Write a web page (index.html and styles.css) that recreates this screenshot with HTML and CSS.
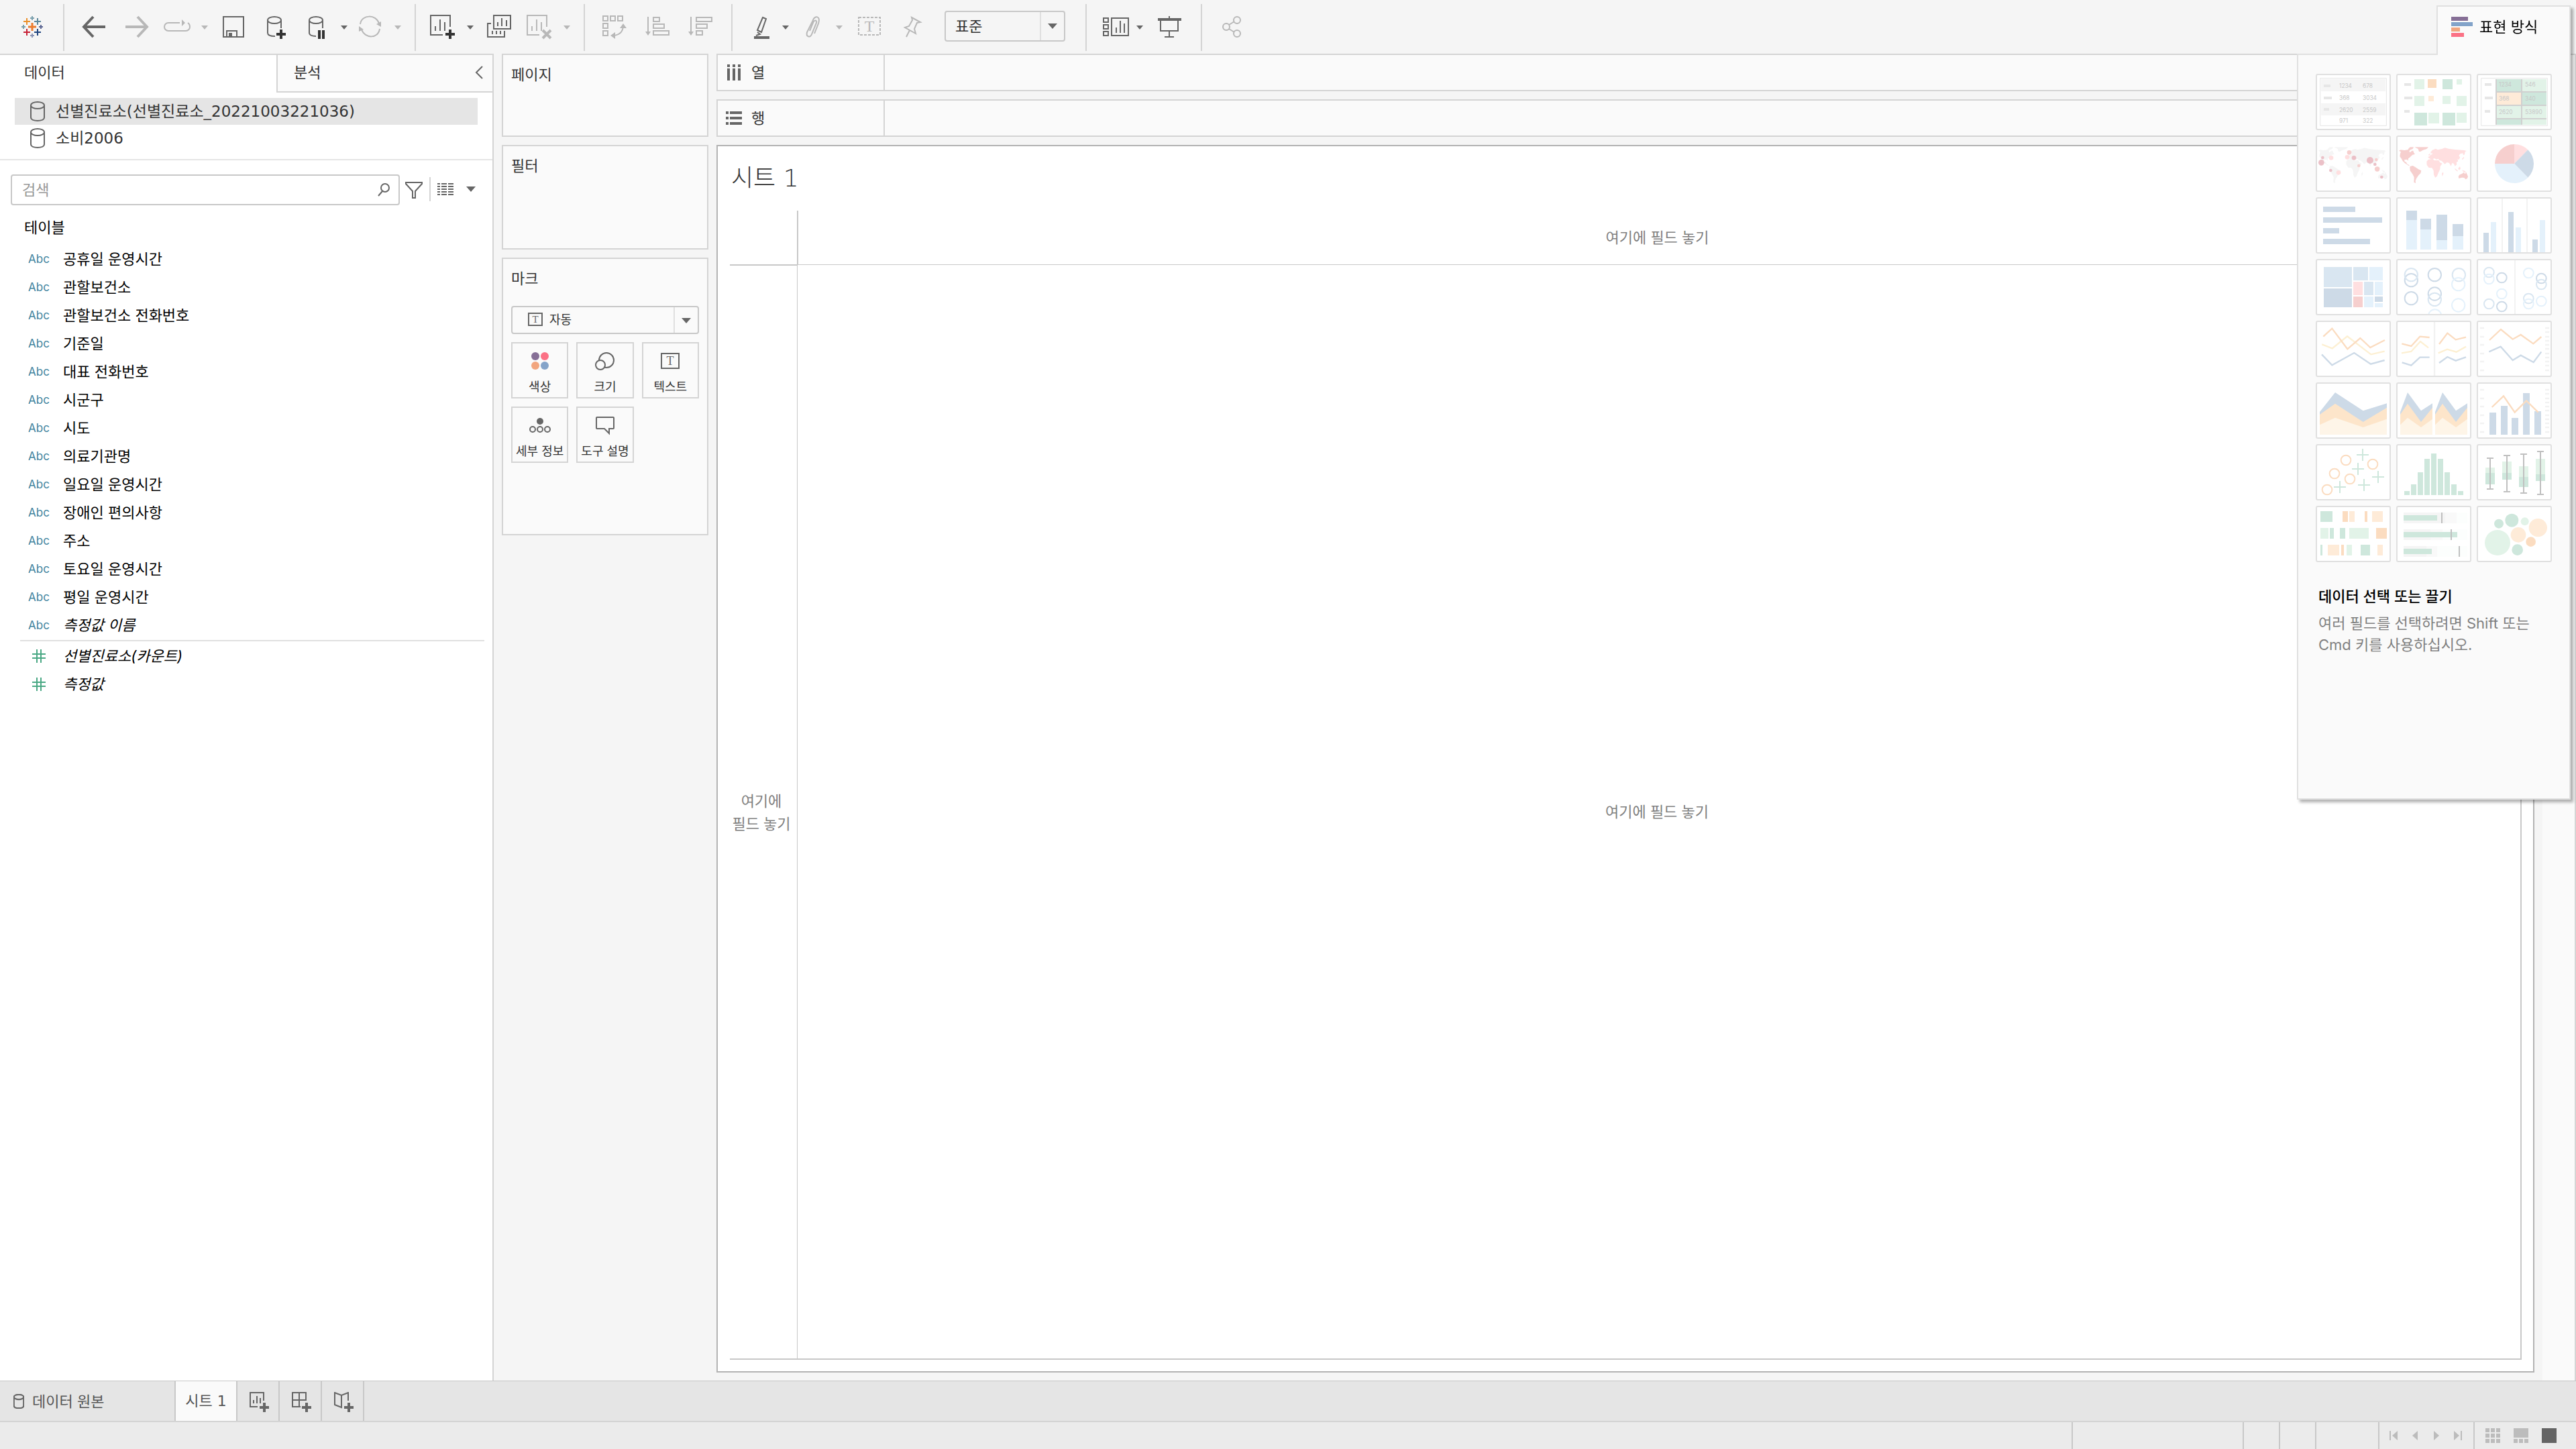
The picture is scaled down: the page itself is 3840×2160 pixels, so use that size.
FILE: index.html
```html
<!DOCTYPE html>
<html lang="ko">

<head>
    <meta charset="UTF-8">
    <meta name="viewport" content="width=device-width, initial-scale=1.0">
    <title>시트 1</title>
    <link rel="stylesheet" href="styles.css">
</head>

<body>
    <!-- Shared shapes -->
    <svg class="defs" aria-hidden="true">
        <symbol id="db" viewBox="0 0 22 30">
            <path d="M1 6v18c0 3 4 5 10 5s10-2 10-5V6" />
            <ellipse cx="11" cy="6" rx="10" ry="5" />
        </symbol>
        <symbol id="world-america" viewBox="0 0 324 240">
            <path d="M6 62l8-4 16 2 16-2 4-6 6-6h16l-4 8-10 4-6 6 4 6 8-8h6l3 9 5 6-12 4-10 10-8 6-1 10-5-6-12 2 2 8 7 2 3 8 8 4 4 3-4 1-18-12-9-9-5-9-8-12 2-12 3-8z" />
            <path d="M76 46h62l-8 8-16 5-12 7h-6l-4-12z" />
            <path d="M56 132l12-3 12 7 12 8 14 7-3 12-9 9-8 11-6 13 1 11-8-4 1-22-6-13-12-17-1-14z" />
            <path d="M272 178l4-8 12-5 8-6 6 7 5-7 8 18-3 9-8 4-6-7-10-1-14 4z" />
        </symbol>
        <symbol id="world-east" viewBox="0 0 324 240">
            <path d="M138 94l-2-4 8-4 2-4 10-5-2-5-5 3-1-7 8-9 14-6 10 5 18-4 14-5 16 4 30 4 40 3 10 3-6 4-2 12-6 3-2-9-12 3-6 8 6 8-6 10-6-2 3 9-8 6 2 9-8 7-6-12-7-2-5 14-8-14-10-3-10 8-8-9-6-6-10-2-5-7-8 3-10-5-11 6z" />
            <path d="M130 110l8-9 20-2 6 6h20l6 10 10 4-9 12-1 14-8 17-6 15-8 5-6-13-1-18-7-12-14-1-9-12z" />
            <path d="M198 164l6-7 1 9-5 10zM138 80l6-6 2 6-6 4zM288 98l8-9 2 5-8 9zM256 140l13 11-1 4-11-9zM271 140l8-7 3 9-7 7zM288 148l14 5 5 9-13-6z" />
        </symbol>
    </svg>

    <header class="toolbar">
        <svg class="tool-icon" viewBox="0 0 64 80">
            <g fill="none" stroke-width="2">
                <path stroke="#eb7c2f" stroke-width="3" d="M32 34v12M26 40h12" />
                <path stroke="#eb912c" d="M24 27v10M19 32h10" />
                <path stroke="#5b879b" d="M40 27v10M35 32h10" />
                <path stroke="#c72035" d="M24 43v10M19 48h10" />
                <path stroke="#1f447e" d="M40 43v10M35 48h10" />
                <path stroke="#7ba0ad" d="M32 24v6M29 27h6M19 37v6M16 40h6" />
                <path stroke="#8a94b5" d="M32 50v6M29 53h6" />
                <path stroke="#5c6692" d="M45 37v6M42 40h6" />
            </g>
        </svg>
        <div class="tool-group">
            <button class="tool" aria-label="실행 취소"><svg viewBox="0 0 64 80"><path stroke-width="4" d="M49 40H18M31 25L17 40l14 15" /></svg></button>
            <button class="tool off" aria-label="다시 실행"><svg viewBox="0 0 64 80"><path stroke-width="4" d="M15 40h31M33 25l14 15-14 15" /></svg></button>
            <button class="tool wide off" aria-label="재생"><svg viewBox="0 0 80 80"><path d="M32 34H15a6 6 0 0 0-6 6v0a6 6 0 0 0 6 6h26a6 6 0 0 0 6-6q0-4-3-6" /><path class="solid" d="M35 29v10l5-5zM64 38h10l-5 6z" /></svg></button>
            <button class="tool" aria-label="저장"><svg viewBox="0 0 64 80"><path d="M17 25h30v30H17zM22 55v-9h15v9" /><path class="solid" d="M25 49h5v6h-5z" /></svg></button>
            <button class="tool" aria-label="새 데이터 원본"><svg viewBox="0 0 64 80"><path d="M19 30v19c0 3 4 5 11 5M39 30v12" /><ellipse cx="29" cy="30" rx="10" ry="5" /><path class="dark" d="M39 44v14M32 51h14" /></svg></button>
            <button class="tool wide" aria-label="자동 업데이트 일시 중지"><svg viewBox="0 0 80 80"><path d="M17 30v19c0 3 4 5 10 5M37 30v12" /><ellipse cx="27" cy="30" rx="10" ry="5" /><path class="dark" d="M32 45v13M38 45v13" /><path class="solid" d="M64 38h10l-5 6z" /></svg></button>
            <button class="tool wide off" aria-label="업데이트 실행"><svg viewBox="0 0 80 80"><path d="M13 36c2-15 24-15 28-1M42 43c-2 15-22 15-27 1" /><path class="solid" d="M37 36l7-4v8zM11 39v8l7-3zM64 38h10l-5 6z" /></svg></button>
        </div>
        <div class="tool-group">
            <button class="tool wide" aria-label="새 워크시트"><svg viewBox="0 0 80 80"><path d="M28 52H10V23h29v17M17 46v-7M24 46V29M31 46V33" /><path class="dark" d="M39 44v14M32 51h14" /><path class="solid" d="M64 38h10l-5 6z" /></svg></button>
            <button class="tool" aria-label="복제"><svg viewBox="0 0 64 80"><path d="M24 23h25v20H24zM20 35h-5v20h25v-9M30 39v-6M36 39V27M43 39v-9M22 51v-5M28 51v-5M34 51v-5" /></svg></button>
            <button class="tool wide off" aria-label="시트 지우기"><svg viewBox="0 0 80 80"><path d="M28 52H10V23h29v17M17 46v-7M24 46V29M31 46V33" /><path stroke-width="4" d="M33 45l12 12M45 45L33 57" /><path class="solid" d="M64 38h10l-5 6z" /></svg></button>
        </div>
        <div class="tool-group">
            <button class="tool off" aria-label="행과 열 바꾸기"><svg viewBox="0 0 64 80"><path d="M15 24h7v7h-7zM26 24h7v7h-7zM37 24h7v7h-7zM15 35h7v7h-7zM15 46h7v7h-7zM45 39q-1 13-15 14" /><path class="solid" d="M45 35l5 7H40zM26 53l7-5v10z" /></svg></button>
            <button class="tool off" aria-label="오름차순 정렬"><svg viewBox="0 0 64 80"><path d="M18 25v24M26 26h9v6h-9zM26 36h16v6H26zM26 46h23v6H26z" /><path class="solid" d="M14 47h8l-4 6z" /></svg></button>
            <button class="tool off" aria-label="내림차순 정렬"><svg viewBox="0 0 64 80"><path d="M18 25v24M26 26h23v6H26zM26 36h16v6H26zM26 46h9v6h-9z" /><path class="solid" d="M14 47h8l-4 6z" /></svg></button>
        </div>
        <div class="tool-group">
            <button class="tool wide" aria-label="강조 표시"><svg viewBox="0 0 80 80"><path d="M33 26l5 2-7 20-6-3zM25 48l4 3-6 2" /><path class="thick" d="M20 56h23" /><path class="solid" d="M62 38h10l-5 6z" /></svg></button>
            <button class="tool wide off" aria-label="멤버 그룹화"><svg viewBox="0 0 80 80"><path d="M30 50l6-15c4-12-6-12-8-5l-9 18c-2 7 5 9 7 3l7-17c1-5-4-4-5 0l-5 12" /><path class="solid" d="M62 38h10l-5 6z" /></svg></button>
            <button class="tool off" aria-label="마크 레이블 표시"><svg viewBox="0 0 64 80"><path stroke-dasharray="4 2" d="M16 26h32v26H16z" /><text x="32" y="47" font-size="24">T</text></svg></button>
            <button class="tool off" aria-label="카드 고정"><svg viewBox="0 0 64 80"><path d="M31 26l13 7-5 1-4 9 2 7-16-9 6-2 5-9zM28 45l-5 10" /></svg></button>
            <div class="combo fit">
                <select aria-label="맞춤"><option>표준</option></select>
                <svg class="combo-arrow" viewBox="0 0 34 42"><path class="solid" d="M10 17h14l-7 8z" /></svg>
            </div>
        </div>
        <div class="tool-group">
            <button class="tool wide" aria-label="카드 표시"><svg viewBox="0 0 80 80"><path d="M13 27h7v6h-7zM13 37h7v6h-7zM13 47h7v6h-7zM25 27h25v26H25zM32 49v-8M38 49V31M44 49V35" /><path class="solid" d="M62 38h10l-5 6z" /></svg></button>
            <button class="tool" aria-label="프레젠테이션 모드"><svg viewBox="0 0 64 80"><path d="M31 24v4M18 30v16h26V30M31 46v9M24 55h14" /><path class="thick" d="M14 29h35" /></svg></button>
        </div>
        <div class="tool-group">
            <button class="tool off" aria-label="공유"><svg viewBox="0 0 64 80"><circle cx="24" cy="40" r="5" /><circle cx="40" cy="30" r="5" /><circle cx="40" cy="50" r="5" /><path d="M28 37l8-5M28 43l8 5" /></svg></button>
        </div>
    </header>

    <main class="workspace">
        <!-- Data pane -->
        <aside class="data-pane">
            <div class="pane-tabs">
                <button class="pane-tab active">데이터</button>
                <button class="pane-tab">분석<svg class="chevron" viewBox="0 0 12 20"><path d="M11 1L2 10l9 9" /></svg></button>
            </div>
            <ul class="sources">
                <li class="source selected"><svg class="db-icon"><use href="#db" /></svg>선별진료소(선별진료소_20221003221036)</li>
                <li class="source"><svg class="db-icon"><use href="#db" /></svg>소비2006</li>
            </ul>
            <div class="search-row">
                <label class="search">
                    <input type="text" placeholder="검색" aria-label="검색">
                    <svg viewBox="0 0 20 20"><ellipse cx="12" cy="7" rx="6" ry="6" /><path d="M8 12l-6 7" /></svg>
                </label>
                <button class="filter-btn" aria-label="필터"><svg viewBox="0 0 28 28"><path d="M2 3h24v2L16 16v10h-4V16L2 5z" /></svg></button>
                <button class="view-btn" aria-label="보기"><svg viewBox="0 0 58 20">
                        <path stroke-dasharray="4 2 8 2 8 2" d="M0 2h24M0 6h24M0 10h24M0 14h24M0 18h24" />
                        <path class="solid" d="M43 6h14l-7 8z" />
                    </svg></button>
            </div>
            <h2 class="table-title">테이블</h2>
            <ul class="fields">
                <li><span class="type">Abc</span>공휴일 운영시간</li>
                <li><span class="type">Abc</span>관할보건소</li>
                <li><span class="type">Abc</span>관할보건소 전화번호</li>
                <li><span class="type">Abc</span>기준일</li>
                <li><span class="type">Abc</span>대표 전화번호</li>
                <li><span class="type">Abc</span>시군구</li>
                <li><span class="type">Abc</span>시도</li>
                <li><span class="type">Abc</span>의료기관명</li>
                <li><span class="type">Abc</span>일요일 운영시간</li>
                <li><span class="type">Abc</span>장애인 편의사항</li>
                <li><span class="type">Abc</span>주소</li>
                <li><span class="type">Abc</span>토요일 운영시간</li>
                <li><span class="type">Abc</span>평일 운영시간</li>
                <li><span class="type">Abc</span><em>측정값 이름</em></li>
            </ul>
            <ul class="fields measures">
                <li><svg class="type number" viewBox="0 0 20 20"><path d="M7 0v20M13 0v20M0 7h20M0 13h20" /></svg><em>선별진료소(카운트)</em></li>
                <li><svg class="type number" viewBox="0 0 20 20"><path d="M7 0v20M13 0v20M0 7h20M0 13h20" /></svg><em>측정값</em></li>
            </ul>
        </aside>

        <!-- Cards -->
        <section class="cards">
            <div class="card pages"><h3>페이지</h3></div>
            <div class="card filters"><h3>필터</h3></div>
            <div class="card marks">
                <h3>마크</h3>
                <div class="combo mark-type">
                    <svg class="combo-icon" viewBox="0 0 22 20"><path d="M1 1h20v18H1z" /><text x="11" y="15" font-size="15">T</text></svg>
                    <select aria-label="마크 유형"><option>자동</option></select>
                    <svg class="combo-arrow" viewBox="0 0 34 38"><path class="solid" d="M10 16h14l-7 8z" /></svg>
                </div>
                <div class="mark-grid">
                    <button class="mark"><svg viewBox="0 0 40 32">
                            <circle cx="13" cy="9" r="6" fill="#866f96" stroke="none" />
                            <circle cx="27" cy="9" r="6" fill="#fb7185" stroke="none" />
                            <circle cx="13" cy="23" r="6" fill="#f2a57e" stroke="none" />
                            <circle cx="27" cy="23" r="6" fill="#84a3c9" stroke="none" />
                        </svg>색상</button>
                    <button class="mark"><svg viewBox="0 0 40 32"><circle cx="22" cy="15" r="11" /><circle cx="13" cy="22" r="7" fill="#fafafa" /></svg>크기</button>
                    <button class="mark"><svg viewBox="0 0 40 32"><path d="M7 5h26v22H7z" /><text x="20" y="22" font-size="18">T</text></svg>텍스트</button>
                    <button class="mark"><svg viewBox="0 0 40 32"><circle class="solid" cx="20" cy="10" r="5" /><circle cx="9" cy="22" r="4" /><circle cx="20" cy="22" r="4" /><circle cx="31" cy="22" r="4" /></svg>세부 정보</button>
                    <button class="mark"><svg viewBox="0 0 40 32"><path d="M8 4h24a1 1 0 0 1 1 1v15a1 1 0 0 1-1 1h-6v7l-7-7H8a1 1 0 0 1-1-1V5a1 1 0 0 1 1-1z" /></svg>도구 설명</button>
                </div>
            </div>
        </section>

        <!-- Shelves and sheet -->
        <section class="work">
            <div class="shelf">
                <div class="shelf-name"><svg viewBox="0 0 24 24"><path stroke-width="4" d="M4 0v4M12 0v4M20 0v4M4 6v18M12 6v18M20 6v18" /></svg>열</div>
            </div>
            <div class="shelf">
                <div class="shelf-name"><svg viewBox="0 0 24 24"><path stroke-width="4" d="M0 4h4M0 12h4M0 20h4M6 4h18M6 12h18M6 20h18" /></svg>행</div>
            </div>
            <div class="sheet">
                <h1>시트 1</h1>
                <div class="drop-grid">
                    <div class="corner"></div>
                    <div class="drop top">여기에 필드 놓기</div>
                    <div class="drop side">여기에<br>필드 놓기</div>
                    <div class="drop center">여기에 필드 놓기</div>
                </div>
            </div>
        </section>
        <div class="edge"></div>
    </main>

    <!-- Show me panel -->
    <aside class="show-me">
        <button class="show-me-tab"><svg viewBox="0 0 32 32">
                <path fill="#866f96" d="M0 1h25v6H0z" />
                <path fill="#82a3c9" d="M0 9h32v6H0z" />
                <path fill="#f1a57f" d="M0 17h13v6H0z" />
                <path fill="#fb7185" d="M0 25h19v6H0z" />
            </svg>표현 방식</button>
        <div class="show-me-body">
            <div class="charts">
                <button class="chart" disabled aria-label="텍스트 테이블"><svg viewBox="0 0 324 240">
                        <path fill="#f5f5f5" d="M18 18h288v54H18zM18 126h288v54H18z" />
                        <path fill="none" stroke="#e5e5e5" stroke-width="3" d="M14 14h296v212H14z" />
                        <path fill="#e6e6e6" d="M30 42h30v12H30zM30 96h36v12H30zM30 147h24v12H30z" />
                        <g class="num"><text x="99" y="56">1234</text><text x="204" y="56">678</text><text x="99" y="110">368</text><text x="204" y="110">3034</text><text x="99" y="164">2620</text><text x="204" y="164">2559</text><text x="99" y="212">971</text><text x="204" y="212">322</text></g>
                    </svg></button>
                <button class="chart" disabled aria-label="히트맵"><svg viewBox="0 0 324 240">
                        <path fill="#e6e6e6" d="M30 36h30v12H30zM30 96h36v12H30zM30 156h24v12H30z" />
                        <path fill="#e2f3e8" d="M75 18h45v45H75zM264 18h24v24h-24zM75 93h45v45H75zM201 93h36v36h-36zM264 93h45v45h-45zM138 168h48v48h-48zM264 168h45v45h-45z" />
                        <path fill="#cee7dc" d="M201 18h45v45h-45zM75 168h57v57H75zM201 168h57v57h-57z" />
                        <path fill="#fbdcc0" d="M135 18h39v39h-39z" />
                        <path fill="#feebd8" d="M138 93h24v24h-24z" />
                    </svg></button>
                <button class="chart" disabled aria-label="하이라이트 테이블"><svg viewBox="0 0 324 240">
                        <path fill="none" stroke="#e5e5e5" stroke-width="3" d="M14 14h296v212H14z" />
                        <path fill="#e6e6e6" d="M30 36h30v12H30zM30 96h36v12H30zM30 156h24v12H30z" />
                        <path fill="#d0d0d0" d="M78 18h228v204H78z" />
                        <path fill="#cee7dc" d="M84 18h108v54H84zM198 78h108v54H198zM84 198h108v24H84z" />
                        <path fill="#e2f3e8" d="M198 18h108v54H198zM84 138h108v54H84zM198 138h108v54H198zM198 198h108v24H198z" />
                        <path fill="#feebd8" d="M84 78h108v54H84z" />
                        <g class="num"><text x="93" y="51">1234</text><text x="210" y="51">546</text><text x="93" y="114">368</text><text x="210" y="114">340</text><text x="93" y="174">2620</text><text x="210" y="174">53890</text></g>
                    </svg></button>

                <button class="chart" disabled aria-label="기호 맵"><svg viewBox="0 0 324 240">
                        <g fill="#f5f5f5"><use href="#world-america" /><use href="#world-east" /></g>
                        <g fill="#ebc0c7"><circle cx="19" cy="115" r="13" /><circle cx="25" cy="93" r="7" /><circle cx="61" cy="150" r="7" /><circle cx="165" cy="94" r="10" /><circle cx="237" cy="105" r="15" /><circle cx="259" cy="123" r="7" /><circle cx="289" cy="180" r="7" /></g>
                        <g fill="#f6cfce"><circle cx="144" cy="70" r="10" /><circle cx="187" cy="129" r="7" /><circle cx="265" cy="102" r="7" /><circle cx="269" cy="144" r="11" /></g>
                        <g fill="#ffdfe0"><circle cx="63" cy="94" r="10" /><circle cx="135" cy="91" r="10" /><circle cx="96" cy="160" r="10" /></g>
                    </svg></button>
                <button class="chart" disabled aria-label="맵"><svg viewBox="0 0 324 240"><g fill="#f6cfce"><use href="#world-america" /></g><g fill="#ffdfe0"><use href="#world-east" /></g></svg></button>
                <button class="chart" disabled aria-label="파이 차트"><svg viewBox="0 0 324 240">
                        <path fill="#f6cfce" d="M162 120H75a87 87 0 0 1 87-87z" />
                        <path fill="#ffdfe0" d="M162 120V33a87 87 0 0 1 61 25z" />
                        <path fill="#cddae7" d="M162 120l61-62a87 87 0 0 1 0 124z" />
                        <path fill="#e4f1fb" d="M162 120l61 62a87 87 0 0 1-148-62z" />
                    </svg></button>

                <button class="chart" disabled aria-label="가로 막대"><svg viewBox="0 0 324 240"><path fill="#cddae7" d="M27 36h144v24H27zM27 84h264v24H27zM27 132h72v24H27zM27 180h210v24H27z" /></svg></button>
                <button class="chart" disabled aria-label="누적 막대"><svg viewBox="0 0 324 240">
                        <path fill="#cddae7" d="M39 54h48v42H39zM102 90h48v48h-48zM174 72h48v114h-48zM246 114h48v54h-48z" />
                        <path fill="#e4f1fb" d="M39 96h48v132H39zM102 138h48v90h-48zM174 186h48v42h-48zM246 168h48v60h-48z" />
                    </svg></button>
                <button class="chart" disabled aria-label="병렬 막대"><svg viewBox="0 0 324 240">
                        <path fill="#f2f2f2" d="M105 0h6v240h-6zM216 0h6v240h-6z" />
                        <path fill="#cddae7" d="M24 153h24v87H24zM135 60h24v180h-24zM243 183h24v57h-24z" />
                        <path fill="#e4f1fb" d="M57 105h24v135H57zM168 129h24v111h-24zM276 96h24v144h-24z" />
                    </svg></button>

                <button class="chart" disabled aria-label="트리맵"><svg viewBox="0 0 324 240">
                        <path fill="#d9e6f1" d="M30 30h126v90H30zM162 30h66v60h-66zM210 96h42v60h-42z" />
                        <path fill="#cddae7" d="M30 126h126v84H30zM258 162h36v24h-36z" />
                        <path fill="#e4f1fb" d="M234 30h60v60h-60zM258 96h36v60h-36zM210 162h42v48h-42zM258 192h36v18h-36z" />
                        <path fill="#ffdfe0" d="M162 96h42v60h-42z" />
                        <path fill="#f6cfce" d="M162 162h42v48h-42z" />
                    </svg></button>
                <button class="chart rings" disabled aria-label="원 뷰"><svg viewBox="0 0 324 240">
                        <g stroke="#cddae7"><circle cx="61" cy="89" r="29" /><circle cx="61" cy="170" r="29" /><circle cx="166" cy="65" r="29" /><circle cx="166" cy="150" r="29" /></g>
                        <g stroke="#d9e6f1"><circle cx="61" cy="65" r="29" /><circle cx="166" cy="175" r="29" /><circle cx="274" cy="65" r="29" /></g>
                        <g stroke="#e4f1fb"><circle cx="272" cy="107" r="29" /><circle cx="272" cy="201" r="29" /><circle cx="167" cy="249" r="29" /></g>
                    </svg></button>
                <button class="chart rings" disabled aria-label="병렬 원"><svg viewBox="0 0 324 240">
                        <path fill="#f2f2f2" d="M162 0h6v240h-6z" />
                        <g stroke="#cddae7"><circle cx="106" cy="78" r="22" /><circle cx="106" cy="207" r="22" /><circle cx="283" cy="81" r="22" /></g>
                        <g stroke="#d9e6f1"><circle cx="49" cy="54" r="22" /><circle cx="49" cy="195" r="22" /><circle cx="283" cy="108" r="22" /><circle cx="226" cy="171" r="22" /></g>
                        <g stroke="#e4f1fb"><circle cx="49" cy="84" r="22" /><circle cx="106" cy="150" r="22" /><circle cx="226" cy="57" r="22" /><circle cx="226" cy="195" r="22" /><circle cx="283" cy="183" r="22" /></g>
                    </svg></button>

                <button class="chart lines" disabled aria-label="라인(연속형)"><svg viewBox="0 0 324 240">
                        <path stroke="#fdf0d3" d="M22 100l46 18 67-54 106 81 61-14" />
                        <path stroke="#fbdcc0" d="M28 65l39-36 69 92 57-49 45 42 65-33" />
                        <path stroke="#cddae7" d="M21 145l46 48 99-55 74 50 62-17" />
                    </svg></button>
                <button class="chart lines" disabled aria-label="라인(불연속형)"><svg viewBox="0 0 324 240">
                        <path stroke="#f2f2f2" d="M165 0v240" />
                        <path stroke="#fdf0d3" d="M18 139l43-7 41-45 36 28M182 139l40-17 41 12 43-24" />
                        <path stroke="#fbdcc0" d="M19 97l42 11 39-43 43 4M186 99l37-49 37 29 46-11" />
                        <path stroke="#cddae7" d="M20 181l41 13 39-36h43M186 183l37-27 37 17 46-16" />
                    </svg></button>
                <button class="chart lines" disabled aria-label="이중 라인"><svg viewBox="0 0 324 240">
                        <path stroke="#f2f2f2" d="M9 27h18M9 66h18M9 102h18M9 141h18M9 177h18M9 216h18M300 27h18M300 45h18M300 66h18M300 84h18M300 102h18M300 120h18M300 141h18M300 159h18M300 177h18M300 195h18M300 216h18" />
                        <path stroke="#fbdcc0" d="M51 81l51-48 53 44 36-20 56 40 36-31" />
                        <path stroke="#cddae7" d="M49 133l52-23 54 61 36-22 57 31 35-47" />
                    </svg></button>

                <button class="chart" disabled aria-label="영역(연속형)"><svg viewBox="0 0 324 240">
                        <path fill="#cddae7" d="M12 126l69-87 125 82 106-33v140H12z" />
                        <path fill="#fde5ca" d="M12 138l69-49 125 82 106-64v121H12z" />
                        <path fill="#fef5e8" d="M12 184l69-32 125 43 106-37v70H12z" />
                    </svg></button>
                <button class="chart" disabled aria-label="영역(불연속형)"><svg viewBox="0 0 324 240">
                        <path fill="#cddae7" d="M12 126l33-87 60 82 51-33v140H12zM168 126l33-87 60 82 51-33v140H168z" />
                        <path fill="#fde5ca" d="M12 138l33-49 60 82 51-64v121H12zM168 138l33-49 60 82 51-64v121H168z" />
                        <path fill="#fef5e8" d="M12 184l33-32 60 43 51-37v70H12zM168 184l33-32 60 43 51-37v70H168z" />
                    </svg></button>
                <button class="chart lines" disabled aria-label="이중 조합"><svg viewBox="0 0 324 240">
                        <path stroke="#f2f2f2" d="M9 27h18M9 66h18M9 102h18M9 141h18M9 177h18M9 216h18M300 27h18M300 45h18M300 66h18M300 84h18M300 102h18M300 120h18M300 141h18M300 159h18M300 177h18M300 195h18M300 216h18" />
                        <path fill="#cddae7" stroke="none" d="M51 129h30v99H51zM102 99h30v129h-30zM150 153h30v75h-30zM201 42h30v186h-30zM252 123h30v105h-30z" />
                        <path stroke="#fbdcc0" d="M62 105l52-50 50 73 52-52 53 52" />
                    </svg></button>

                <button class="chart rings" disabled aria-label="분산형 차트"><svg viewBox="0 0 324 240">
                        <g stroke="#fbdcc0"><circle cx="129" cy="66" r="22" /><circle cx="249" cy="84" r="22" /><circle cx="78" cy="126" r="22" /><circle cx="147" cy="150" r="22" /><circle cx="45" cy="198" r="22" /></g>
                        <path stroke="#cee7dc" d="M204 15v54M177 42h54M183 78v54M156 105h54M273 114v54M246 141h54M210 150v54M183 177h54M102 159v54M75 186h54" />
                    </svg></button>
                <button class="chart" disabled aria-label="히스토그램"><svg viewBox="0 0 324 240"><path fill="#cee7dc" d="M30 204h24v18H30zM60 174h24v48H60zM90 120h24v102H90zM120 60h24v162h-24zM150 36h24v186h-24zM180 60h24v162h-24zM210 120h24v102h-24zM240 174h24v48h-24zM270 204h24v18h-24z" /></svg></button>
                <button class="chart rings" disabled aria-label="박스 플롯"><svg viewBox="0 0 324 240">
                        <path fill="#e2f3e8" d="M33 99h42v24H33zM108 72h42v51h-42zM183 93h42v48h-42zM258 60h42v69h-42z" />
                        <path fill="#cee7dc" d="M33 123h42v51H33zM108 123h42v30h-42zM183 141h42v45h-42zM258 129h42v30h-42z" />
                        <path stroke="#c0c0c0" d="M54 57v138M39 57h30M39 195h30M129 45v162M114 45h30M114 207h30M204 39v174M189 39h30M189 213h30M279 27v192M264 27h30M264 219h30" />
                    </svg></button>

                <button class="chart" disabled aria-label="간트 차트"><svg viewBox="0 0 324 240">
                        <path fill="#cee7dc" d="M15 18h54v48H15zM57 93h18v48H57zM102 93h24v48h-24zM15 168h9v48h-9zM195 168h42v48h-42z" />
                        <path fill="#e2f3e8" d="M15 93h36v48H15zM144 93h87v48h-87zM132 168h24v48h-24z" />
                        <path fill="#fbdcc0" d="M114 18h24v48h-24zM213 18h12v48h-12zM264 93h48v48h-48zM108 168h12v48h-12z" />
                        <path fill="#feebd8" d="M144 18h24v48h-24zM246 18h48v48h-48zM48 168h51v48H48zM270 168h24v48h-24z" />
                    </svg></button>
                <button class="chart" disabled aria-label="불릿 그래프"><svg viewBox="0 0 324 240">
                        <path fill="#fcfefd" d="M27 24h285v48H27zM27 99h285v48H27zM27 174h285v48H27z" />
                        <path fill="#f9f9f9" d="M27 24h237v48H27zM27 99h174v48H27zM27 174h150v48H27z" />
                        <path fill="#f5f5f5" d="M27 24h186v48H27zM27 99h120v48H27zM27 174h102v48H27z" />
                        <path fill="#cee7dc" d="M27 36h150v24H27zM27 111h240v24H27zM27 186h126v24H27z" />
                        <path fill="#c0c0c0" d="M195 24h6v48h-6zM237 99h6v48h-6zM273 174h6v48h-6z" />
                    </svg></button>
                <button class="chart" disabled aria-label="채워진 버블"><svg viewBox="0 0 324 240">
                        <g fill="#cee7dc"><circle cx="93" cy="74" r="21" /><circle cx="151" cy="59" r="30" /><circle cx="176" cy="191" r="25" /></g>
                        <g fill="#e2f3e8"><circle cx="87" cy="159" r="57" /><circle cx="209" cy="64" r="18" /></g>
                        <g fill="#feebd8"><circle cx="180" cy="124" r="34" /><circle cx="268" cy="92" r="41" /></g>
                        <circle cx="236" cy="155" r="22" fill="#fbdcc0" />
                    </svg></button>
            </div>
            <h3>데이터 선택 또는 끌기</h3>
            <p>여러 필드를 선택하려면 Shift 또는 Cmd 키를 사용하십시오.</p>
        </div>
    </aside>

    <nav class="sheet-tabs">
        <button class="source-tab"><svg class="db-icon"><use href="#db" /></svg>데이터 원본</button>
        <button class="sheet-tab">시트 1</button>
        <button class="new-tab" aria-label="새 워크시트"><svg viewBox="0 0 30 30"><path d="M12 22H1V1h20v12M6 17v-5M11 17V6M16 17V9" /><path class="plus" d="M22 16v14M15 23h14" /></svg></button>
        <button class="new-tab" aria-label="새 대시보드"><svg viewBox="0 0 30 30"><path d="M13 22H1V1h20v12M1 12h20M11 1v21" /><path class="plus" d="M22 16v14M15 23h14" /></svg></button>
        <button class="new-tab" aria-label="새 스토리"><svg viewBox="0 0 30 30"><path d="M21 13V1L11 5 1 1v18l10 4V5" /><path class="plus" d="M22 16v14M15 23h14" /></svg></button>
    </nav>

    <footer class="status">
        <div class="cell message"></div>
        <div class="cell small"></div>
        <div class="cell small"></div>
        <div class="cell medium"></div>
        <div class="cell pager">
            <button aria-label="처음"><svg viewBox="0 0 12 14"><path d="M0 0h2v14H0zM12 0v14L4 7z" /></svg></button>
            <button aria-label="이전"><svg viewBox="0 0 12 14"><path d="M10 0v14L2 7z" /></svg></button>
            <button aria-label="다음"><svg viewBox="0 0 12 14"><path d="M2 0v14l8-7z" /></svg></button>
            <button aria-label="마지막"><svg viewBox="0 0 12 14"><path d="M10 0h2v14h-2zM0 0v14l8-7z" /></svg></button>
        </div>
        <div class="cell views">
            <button aria-label="시트 정렬기"><svg viewBox="0 0 22 22"><path d="M0 0h6v6H0zM8 0h6v6H8zM16 0h6v6h-6zM0 8h6v6H0zM8 8h6v6H8zM16 8h6v6h-6zM0 16h6v6H0zM8 16h6v6H8zM16 16h6v6h-6z" /></svg></button>
            <button aria-label="필름 스트립"><svg viewBox="0 0 22 22"><path d="M0 0h22v14H0zM0 16h6v6H0zM8 16h6v6H8zM16 16h6v6h-6z" /></svg></button>
            <button class="on" aria-label="탭"><svg viewBox="0 0 22 22"><path d="M0 0h22v22H0z" /></svg></button>
        </div>
    </footer>
</body>

</html>
```
FILE: styles.css
```css
* {
    box-sizing: border-box;
}

body {
    margin: 0;
    min-height: 100vh;
    display: flex;
    flex-direction: column;
    position: relative;
    background-color: #f5f5f5;
    color: #333;
    font-family: Inter, "Noto Sans CJK KR", sans-serif;
    font-size: 22px;
    line-height: 32px;
}

button,
input,
select {
    font: inherit;
    color: inherit;
    margin: 0;
    padding: 0;
    border: 0;
    background: none;
}

ul {
    list-style: none;
    margin: 0;
    padding: 0;
}

h1,
h2,
h3,
p {
    margin: 0;
    font-size: 22px;
    font-weight: 400;
}

svg {
    display: block;
    flex: none;
    fill: none;
    stroke: #666;
    stroke-width: 2;
}

svg text {
    font-family: "Liberation Serif", serif;
    text-anchor: middle;
    fill: #666;
    stroke: none;
}

.solid {
    fill: #666;
    stroke: none;
}

.dark {
    stroke: #333;
    stroke-width: 4;
}

.thick {
    stroke-width: 4;
}

.defs {
    position: absolute;
    width: 0;
    height: 0;
}

/* Toolbar */
.toolbar {
    display: flex;
    height: 80px;
    padding-left: 16px;
}

.tool-icon,
.tool svg {
    height: 80px;
}

.tool-group {
    display: flex;
    position: relative;
    padding-left: 14px;
    margin-left: 14px;
}

.tool-group::before {
    content: "";
    position: absolute;
    left: 0;
    top: 6px;
    width: 2px;
    height: 70px;
    background-color: #d4d4d4;
}

.tool {
    width: 64px;
}

.tool.wide {
    width: 80px;
}

.tool.off svg {
    stroke: #b8b8b8;
}

.tool.off .solid,
.tool.off text {
    fill: #b8b8b8;
}

.combo {
    position: relative;
    border: 2px solid #c8c8c8;
    border-radius: 4px;
}

.combo select {
    width: 100%;
    height: 100%;
    appearance: none;
    cursor: pointer;
}

.combo-arrow {
    position: absolute;
    top: 0;
    right: 0;
    height: 100%;
    width: 36px;
    border-left: 2px solid #e0e0e0;
    pointer-events: none;
}

.fit {
    width: 180px;
    height: 46px;
    margin: 16px 16px 0;
}

.fit select {
    padding-left: 14px;
}

/* Main area */
.workspace {
    flex: 1;
    display: flex;
    gap: 12px;
}

.data-pane {
    width: 736px;
    border-top: 2px solid #d4d4d4;
    border-right: 2px solid #d4d4d4;
    background-color: #fff;
}

.pane-tabs {
    display: flex;
}

.pane-tab {
    flex: 1;
    display: flex;
    align-items: center;
    justify-content: space-between;
    height: 56px;
    padding: 0 14px 2px 24px;
    border-left: 2px solid #d4d4d4;
    border-bottom: 2px solid #d4d4d4;
    background-color: #fafafa;
    text-align: left;
}

.pane-tab.active {
    flex: none;
    width: 412px;
    padding-left: 36px;
    padding-bottom: 4px;
    border: 0;
    background-color: #fff;
}

.chevron {
    width: 12px;
    height: 20px;
}

.sources {
    padding: 8px 22px 11px;
    border-bottom: 2px solid #e5e5e5;
    font-family: "DejaVu Sans", "Noto Sans CJK KR", sans-serif;
    font-size: 23px;
}

.source {
    display: flex;
    align-items: center;
    gap: 16px;
    height: 40px;
    padding-left: 23px;
}

.source.selected {
    background-color: #e5e5e5;
}

.db-icon {
    width: 22px;
    height: 30px;
}

.search-row {
    display: flex;
    margin: 21px 0 12px 16px;
}

.search {
    flex: 1;
    display: flex;
    align-items: center;
    height: 46px;
    padding: 0 12px 0 15px;
    border: 2px solid #c8c8c8;
    border-radius: 4px;
}

.search input {
    flex: 1;
    min-width: 0;
    outline: none;
}

.search input::placeholder {
    color: #999;
}

.search svg {
    width: 20px;
    height: 20px;
}

.filter-btn {
    width: 44px;
    padding-left: 7px;
}

.filter-btn svg {
    width: 28px;
    height: 28px;
}

.view-btn {
    width: 94px;
    height: 36px;
    margin-top: 4px;
    padding-left: 10px;
    border-left: 2px solid #d4d4d4;
}

.view-btn svg {
    width: 58px;
    height: 20px;
}

.table-title {
    padding-left: 36px;
    line-height: 42px;
    margin-bottom: 5px;
    color: #000;
}

.fields {
    color: #000;
}

.fields li {
    display: flex;
    align-items: center;
    height: 42px;
    padding-left: 42px;
}

.measures {
    position: relative;
    margin-top: 1px;
    padding-top: 3px;
}

.measures::before {
    content: "";
    position: absolute;
    top: 0;
    left: 30px;
    right: 12px;
    height: 2px;
    background-color: #e0e0e0;
}

.type {
    width: 52px;
    color: #3f839e;
    font-size: 17px;
}

.type.number {
    width: 20px;
    height: 20px;
    margin: 0 26px 0 6px;
    stroke: #4aa884;
}

/* Cards */
.cards {
    width: 308px;
    display: flex;
    flex-direction: column;
    gap: 12px;
}

.card {
    padding: 13px 12px 12px;
    border: 2px solid #d4d4d4;
    background-color: #fafafa;
}

.pages {
    height: 124px;
}

.filters {
    height: 156px;
}

.marks {
    height: 414px;
}

.mark-type {
    height: 42px;
    margin: 25px 0 12px;
}

.mark-type select {
    padding-left: 55px;
    font-size: 18px;
}

.combo-icon {
    position: absolute;
    left: 23px;
    top: 8px;
    width: 22px;
    height: 20px;
    pointer-events: none;
}

.mark-grid {
    display: grid;
    grid-template-columns: repeat(3, 1fr);
    gap: 12px;
}

.mark {
    display: flex;
    flex-direction: column;
    align-items: center;
    height: 84px;
    padding-top: 10px;
    border: 2px solid #d4d4d4;
    font-size: 18px;
    white-space: nowrap;
}

.mark svg {
    width: 40px;
    height: 32px;
    margin-bottom: 7px;
}

/* Shelves */
.work {
    flex: 1;
    display: flex;
    flex-direction: column;
    gap: 12px;
    margin-bottom: 12px;
}

.shelf {
    display: flex;
    height: 56px;
    border: 2px solid #d4d4d4;
    background-color: #fafafa;
}

.shelf-name {
    display: flex;
    align-items: center;
    gap: 14px;
    width: 249px;
    padding-left: 12px;
    border-right: 2px solid #d4d4d4;
}

.shelf-name svg {
    width: 24px;
    height: 24px;
}

/* Sheet */
.sheet {
    flex: 1;
    display: flex;
    flex-direction: column;
    border: 2px solid #b3b3b3;
    background-color: #fff;
}

.sheet h1 {
    padding-left: 20px;
    font-family: "DejaVu Sans", "Noto Sans CJK KR", sans-serif;
    font-size: 36px;
    font-weight: 300;
    line-height: 96px;
}

.drop-grid {
    flex: 1;
    display: grid;
    grid-template-columns: 100px 1fr;
    grid-template-rows: 80px 1fr;
    margin: 0 17px 17px 18px;
}

.drop {
    display: flex;
    align-items: center;
    justify-content: center;
    padding-right: 6px;
    border: 0 solid #c8c8c8;
    color: #808080;
}

.drop.top {
    border-width: 0 2px;
}

.drop.side {
    border-width: 2px 0;
    text-align: center;
    line-height: 34px;
}

.drop.center {
    border-width: 1px 2px 2px 1px;
}

.edge {
    width: 50px;
    border-top: 2px solid #d4d4d4;
    border-right: 2px solid #d4d4d4;
    background-color: #fafafa;
}

/* Show me */
.show-me {
    position: absolute;
    top: 8px;
    right: 8px;
    width: 408px;
    filter: drop-shadow(4px 4px 2px rgba(0, 0, 0, 0.3));
}

.show-me-tab {
    position: relative;
    z-index: 1;
    display: flex;
    align-items: center;
    gap: 10px;
    width: 200px;
    height: 74px;
    margin: 0 0 -2px auto;
    padding: 0 0 12px 20px;
    border: 2px solid #e0e0e0;
    border-bottom: 0;
    background-color: #fafafa;
    color: #000;
}

.show-me-tab svg {
    width: 32px;
    height: 32px;
    stroke: none;
}

.show-me-body {
    padding: 28px 26px 213px;
    border: 2px solid #e0e0e0;
    background-color: #fafafa;
}

.show-me-body h3 {
    margin: 35px 4px 8px;
    color: #000;
    font-weight: 500;
}

.show-me-body p {
    margin: 0 4px;
    color: #808080;
}

.charts {
    display: grid;
    grid-template-columns: repeat(3, 112px);
    gap: 8px;
}

.chart {
    height: 84px;
    border: 2px solid #e0e0e0;
    border-radius: 3px;
    background-color: #fff;
}

.chart svg {
    width: 108px;
    height: 80px;
    stroke: none;
}

.chart.rings svg {
    stroke-width: 6;
}

.chart.lines svg {
    stroke-width: 7;
}

.num text {
    font-family: Inter, sans-serif;
    font-size: 25px;
    text-anchor: start;
    fill: #c8c8c8;
}

/* Bottom bars */
.sheet-tabs {
    display: flex;
    height: 62px;
    border-top: 1px solid #c8c8c8;
    border-bottom: 2px solid #d4d4d4;
    background-color: #e5e5e5;
    color: #555;
}

.sheet-tabs button {
    border-right: 2px solid #c8c8c8;
}

.source-tab {
    display: flex;
    align-items: center;
    gap: 12px;
    width: 262px;
    padding-left: 20px;
}

.source-tab .db-icon {
    width: 16px;
    height: 22px;
    stroke-width: 3;
}

.sheet-tab {
    width: 92px;
    background-color: #fafafa;
}

.sheet-tabs .sheet-tab {
    font-family: "DejaVu Sans", "Noto Sans CJK KR", sans-serif;
}

.new-tab {
    width: 63px;
    padding: 2px 0 0 18px;
}

.new-tab svg {
    width: 30px;
    height: 30px;
}

.plus {
    stroke-width: 4;
}

.status {
    display: flex;
    justify-content: flex-end;
    height: 40px;
    background-color: #ebebeb;
}

.cell {
    border-left: 2px solid #c8c8c8;
}

.message {
    width: 255px;
}

.small {
    width: 54px;
}

.medium {
    width: 94px;
}

.pager,
.views {
    display: flex;
    align-items: center;
}

.pager {
    width: 142px;
    gap: 20px;
    padding-left: 15px;
}

.views {
    width: 153px;
    gap: 20px;
    padding-left: 16px;
}

.pager svg {
    width: 12px;
    height: 14px;
}

.views svg {
    width: 22px;
    height: 22px;
}

.status svg {
    fill: #bcbcbc;
    stroke: none;
}

.status .on svg {
    fill: #646464;
}
```
